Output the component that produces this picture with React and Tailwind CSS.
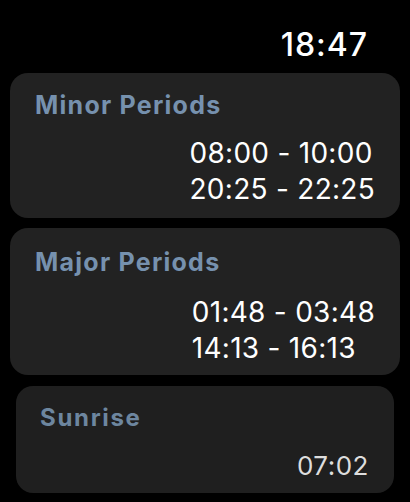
const cards = [
  {
    title: "Minor Periods",
    lines: ["08:00 - 10:00", "20:25 - 22:25"],
    spacing: "pt-[20px] pb-[11px]",
    gap: "mt-[17px]",
  },
  {
    title: "Major Periods",
    lines: ["01:48 - 03:48", "14:13 - 16:13"],
    spacing: "pt-[22px] pb-[9px]",
    gap: "mt-[19px]",
  },
];

const PeriodCard = ({ title, lines, spacing, gap }) => (
  <div className={`rounded-[18px] bg-[#222222] pl-[25px] pr-[25px] ${spacing}`}>
    <p className="text-[25px] leading-none font-bold tracking-[0.05em] text-[#7691ae]">{title}</p>
    <div className={`flex justify-end ${gap}`}>
      <div className="flex flex-col items-start">
        {lines.map((line, index) => (
          <span
            key={`${line}-${index}`}
            className="text-[28px] leading-[36px] tracking-[0.01em] text-white"
          >
            {line}
          </span>
        ))}
      </div>
    </div>
  </div>
);

export default function App() {
  return (
    <div
      className="w-[410px] h-[502px] overflow-hidden bg-black"
      style={{ fontFamily: "Inter, 'Noto Sans', sans-serif" }}
    >
      <div className="flex justify-end pt-[29px] pr-[42px]">
        <span className="text-[32px] leading-none font-medium tracking-[0.03em] text-white">
          18:47
        </span>
      </div>
      <div className="mt-[12px] px-[10px] flex flex-col gap-[10px]">
        {cards.map((card) => (
          <PeriodCard key={card.title} {...card} />
        ))}
      </div>
      <div className="mt-[11px] mx-[16px] rounded-[17px] bg-[#1f1f1f] pt-[20px] pb-[11px] pl-[24px] pr-[25px]">
        <p className="text-[24px] leading-none font-bold tracking-[0.07em] text-[#6d869f]">
          Sunrise
        </p>
        <div className="mt-[20px] flex justify-end">
          <span className="text-[26px] leading-[32px] tracking-[0.02em] text-[#dddddd]">
            07:02
          </span>
        </div>
      </div>
    </div>
  );
}
